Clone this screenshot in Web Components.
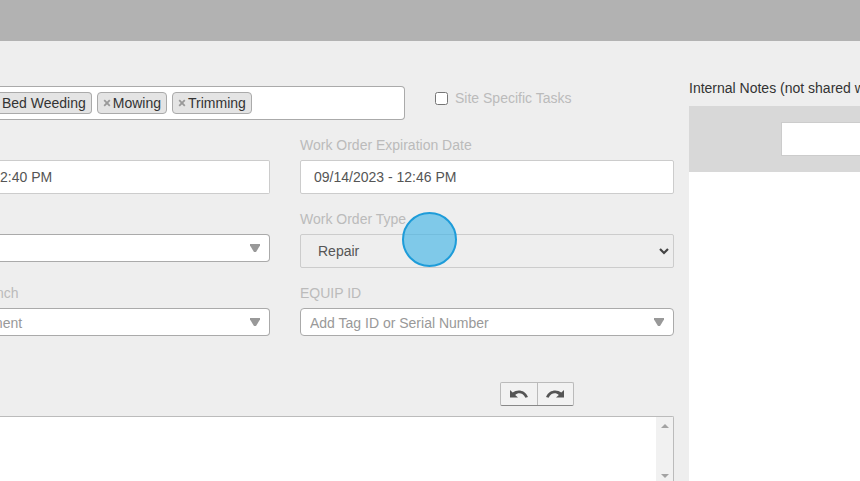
<!DOCTYPE html>
<html lang="en">
<head>
<meta charset="utf-8">
<title>Work Order</title>
<style>
  body {
    margin: 0;
    background: #eee;
    color: #333;
    font: 14px/20px "Liberation Sans", Arial, sans-serif;
    overflow: hidden;
  }
</style>
</head>
<body>
<work-order-page></work-order-page>

<script>
class TaskTag extends HTMLElement {
  constructor() {
    super();
    this.attachShadow({ mode: 'open' });
    const remove = this.hasAttribute('cut') ? '' : `
      <button type="button" aria-label="Remove">
        <svg width="8" height="8" viewBox="0 0 8 8"><path d="M1.2 1.2 6.8 6.8M6.8 1.2 1.2 6.8" stroke="#999" stroke-width="1.8"/></svg>
      </button>`;
    this.shadowRoot.innerHTML = `
      <style>
        :host {
          display: flex;
          align-items: center;
          gap: 2px;
          box-sizing: border-box;
          height: 22px;
          padding: 0 5px;
          border: 1px solid #aaa;
          border-radius: 4px;
          background: #e4e4e4;
          white-space: nowrap;
        }
        :host([cut]) {
          padding-left: 2px;
          border-left: 0;
          border-radius: 0 4px 4px 0;
        }
        button {
          display: flex;
          padding: 0;
          border: 0;
          background: none;
          cursor: pointer;
        }
      </style>
      ${remove}<span><slot></slot></span>
    `;
  }
}

class FormField extends HTMLElement {
  constructor() {
    super();
    this.attachShadow({ mode: 'open' });
    this.shadowRoot.innerHTML = `
      <style>
        :host {
          display: block;
          position: relative;
        }
        label {
          display: block;
          height: 20px;
          margin-bottom: 5px;
          color: #bbb;
        }
        .control {
          display: grid;
          grid-template-columns: minmax(0, 1fr) auto;
          align-items: start;
          min-height: 34px;
        }
        input, select {
          grid-area: 1 / 1 / 2 / 3;
          box-sizing: border-box;
          width: 100%;
          height: 34px;
          margin: 0;
          padding: 0 13px;
          border: 1px solid #ccc;
          border-radius: 2px;
          background: #fff;
          color: #555;
          font: inherit;
          appearance: none;
        }
        .combo {
          height: 28px;
          padding: 2px 9px 0;
          border: 1px solid #aaa;
          border-radius: 4px;
          color: #999;
        }
        .native {
          padding: 0 17px;
          background: #eee;
        }
        :host([cut]) label { text-indent: -4px; }
        :host([cut]) input, :host([cut]) select {
          padding-left: 0;
          border-left: 0;
          border-radius: 0 4px 4px 0;
        }
        :host([cut]) input { border-radius: 0 2px 2px 0; }
        :host([cut]) select { text-indent: -9px; }
        svg {
          grid-area: 1 / 2;
          pointer-events: none;
          z-index: 1;
        }
      </style>
      <label for="control">${this.getAttribute('label') || ''}</label>
      <div class="control">${this.renderControl()}</div>
      <slot></slot>
    `;
  }

  renderControl() {
    const value = this.getAttribute('value') || '';
    const name = this.hasAttribute('label') ? '' : 'aria-label="Selection"';
    switch (this.getAttribute('type')) {
      case 'combo':
        return `
          <select id="control" class="combo" ${name}><option>${value}</option></select>
          <svg width="20" height="28" viewBox="0 0 20 28"><path d="M0 10h10v1.5L6 18H4L0 11.500z" fill="#999"/></svg>`;
      case 'select':
        return `
          <select id="control" class="native" ${name}><option>${value}</option></select>
          <svg width="16" height="34" viewBox="0 0 16 34"><path d="M2 15l4 4 4-4" fill="none" stroke="#444" stroke-width="2.2"/></svg>`;
      default:
        return `<input id="control" type="text" value="${value}" ${name}>`;
    }
  }
}

class HistoryToolbar extends HTMLElement {
  constructor() {
    super();
    this.attachShadow({ mode: 'open' });
    this.shadowRoot.innerHTML = `
      <style>
        :host {
          display: flex;
          box-sizing: border-box;
          width: 74px;
          height: 24px;
          border: 1px solid #bbb;
          border-bottom-color: #888;
          border-radius: 2px;
          background: #f2f2f2;
        }
        button {
          display: flex;
          flex: 1;
          align-items: center;
          justify-content: center;
          padding: 0;
          border: 0;
          background: none;
          cursor: pointer;
        }
        button + button { border-left: 1px solid #bbb; }
      </style>
      <button type="button" aria-label="Undo">
        <svg width="18" height="8" viewBox="0 0 18 8"><path d="M0 0 2.7 2.5C7 -1 15 -.6 18 7l-2.6.8C13 2.500 8 2.200 5.200 5L8 7.600H0z" fill="#555"/></svg>
      </button>
      <button type="button" aria-label="Redo">
        <svg width="18" height="8" viewBox="0 0 18 8"><path d="M18 0 15.300 2.500C11 -1 3 -.6 0 7l2.600.8C5 2.500 10 2.200 12.800 5L10 7.600h8z" fill="#555"/></svg>
      </button>
    `;
  }
}

class ScrollEditor extends HTMLElement {
  constructor() {
    super();
    this.attachShadow({ mode: 'open' });
    this.shadowRoot.innerHTML = `
      <style>
        :host {
          display: flex;
          box-sizing: border-box;
          border: 1px solid #bbb;
          border-width: 1px 1px 0 0;
          border-radius: 0 2px 0 0;
          background: #fff;
        }
        textarea {
          flex: 1;
          min-width: 0;
          padding: 8px;
          border: 0;
          background: #fff;
          font: inherit;
          resize: none;
          overflow: hidden;
        }
        .track {
          display: flex;
          flex-direction: column;
          justify-content: space-between;
          align-items: center;
          box-sizing: border-box;
          width: 17px;
          padding: 7px 0 3px;
          background: #f1f1f1;
        }
      </style>
      <textarea aria-label="Work order notes"></textarea>
      <div class="track">
        <svg width="8" height="4" viewBox="0 0 8 4"><path d="M0 4 4 0l4 4z" fill="#a3a3a3"/></svg>
        <svg width="8" height="4" viewBox="0 0 8 4"><path d="M0 0l4 4 4-4z" fill="#a3a3a3"/></svg>
      </div>
    `;
  }
}

class InternalNotes extends HTMLElement {
  constructor() {
    super();
    this.attachShadow({ mode: 'open' });
    this.shadowRoot.innerHTML = `
      <style>
        :host {
          display: flex;
          flex-direction: column;
          overflow: hidden;
        }
        label {
          height: 28px;
          white-space: nowrap;
        }
        .bar {
          display: flex;
          padding: 16px 0 16px 92px;
          background: #d8d8d8;
        }
        input {
          flex: 1;
          min-width: 0;
          box-sizing: border-box;
          height: 34px;
          border: 1px solid #ccc;
          border-right: 0;
          background: #fff;
          font: inherit;
        }
        .list {
          flex: 1;
          background: #fff;
        }
      </style>
      <label for="note">Internal Notes (not shared w</label>
      <div class="bar"><input id="note" type="text"></div>
      <div class="list"></div>
    `;
  }
}

class WorkOrderPage extends HTMLElement {
  constructor() {
    super();
    this.attachShadow({ mode: 'open' });
    this.shadowRoot.innerHTML = `
      <style>
        :host {
          display: flex;
          flex-direction: column;
          min-height: 100vh;
        }
        header {
          height: 41px;
          background: #b2b2b2;
        }
        main {
          flex: 1;
          display: flex;
          gap: 15px;
        }
        form {
          flex: 1;
          min-width: 0;
          display: flex;
          flex-direction: column;
          padding-top: 45px;
        }
        internal-notes {
          flex: 0 0 171px;
          padding-top: 37px;
        }
        .tasks {
          display: grid;
          grid-template-columns: 405fr 239fr;
          gap: 30px;
          margin-bottom: 15px;
        }
        .tags {
          display: flex;
          align-items: center;
          gap: 5px;
          box-sizing: border-box;
          height: 34px;
          border: 1px solid #aaa;
          border-left: 0;
          border-radius: 0 4px 4px 0;
          background: #fff;
        }
        .check {
          display: flex;
          align-items: center;
          gap: 7px;
          height: 24px;
          color: #bbb;
        }
        .check input {
          width: 13px;
          height: 13px;
          margin: 0;
        }
        .fields {
          display: grid;
          grid-template-columns: 270fr 374fr;
          gap: 15px 30px;
        }
        .pointer {
          position: absolute;
          left: 102px;
          top: 3px;
          z-index: 2;
          box-sizing: border-box;
          width: 55px;
          height: 55px;
          border: 2px solid #1e9cd9;
          border-radius: 50%;
          background: rgba(67, 181, 230, 0.65);
          pointer-events: none;
        }
        history-toolbar {
          align-self: flex-end;
          margin: 40px 100px 10px 0;
        }
        scroll-editor { flex: 1; }
      </style>
      <header></header>
      <main>
        <form>
          <div class="tasks">
            <div class="tags">
              <task-tag cut>Bed Weeding</task-tag>
              <task-tag>Mowing</task-tag>
              <task-tag>Trimming</task-tag>
            </div>
            <label class="check"><input type="checkbox">Site Specific Tasks</label>
          </div>
          <div class="fields">
            <form-field cut type="text" value="2:40 PM"></form-field>
            <form-field type="text" label="Work Order Expiration Date" value="09/14/2023 - 12:46 PM"></form-field>
            <form-field cut type="combo"></form-field>
            <form-field type="select" label="Work Order Type" value="Repair"><span class="pointer"></span></form-field>
            <form-field cut type="combo" label="nch" value="ment"></form-field>
            <form-field type="combo" label="EQUIP ID" value="Add Tag ID or Serial Number"></form-field>
          </div>
          <history-toolbar></history-toolbar>
          <scroll-editor></scroll-editor>
        </form>
        <internal-notes></internal-notes>
      </main>
    `;
  }
}

customElements.define('task-tag', TaskTag);
customElements.define('form-field', FormField);
customElements.define('history-toolbar', HistoryToolbar);
customElements.define('scroll-editor', ScrollEditor);
customElements.define('internal-notes', InternalNotes);
customElements.define('work-order-page', WorkOrderPage);
</script>
</body>
</html>
